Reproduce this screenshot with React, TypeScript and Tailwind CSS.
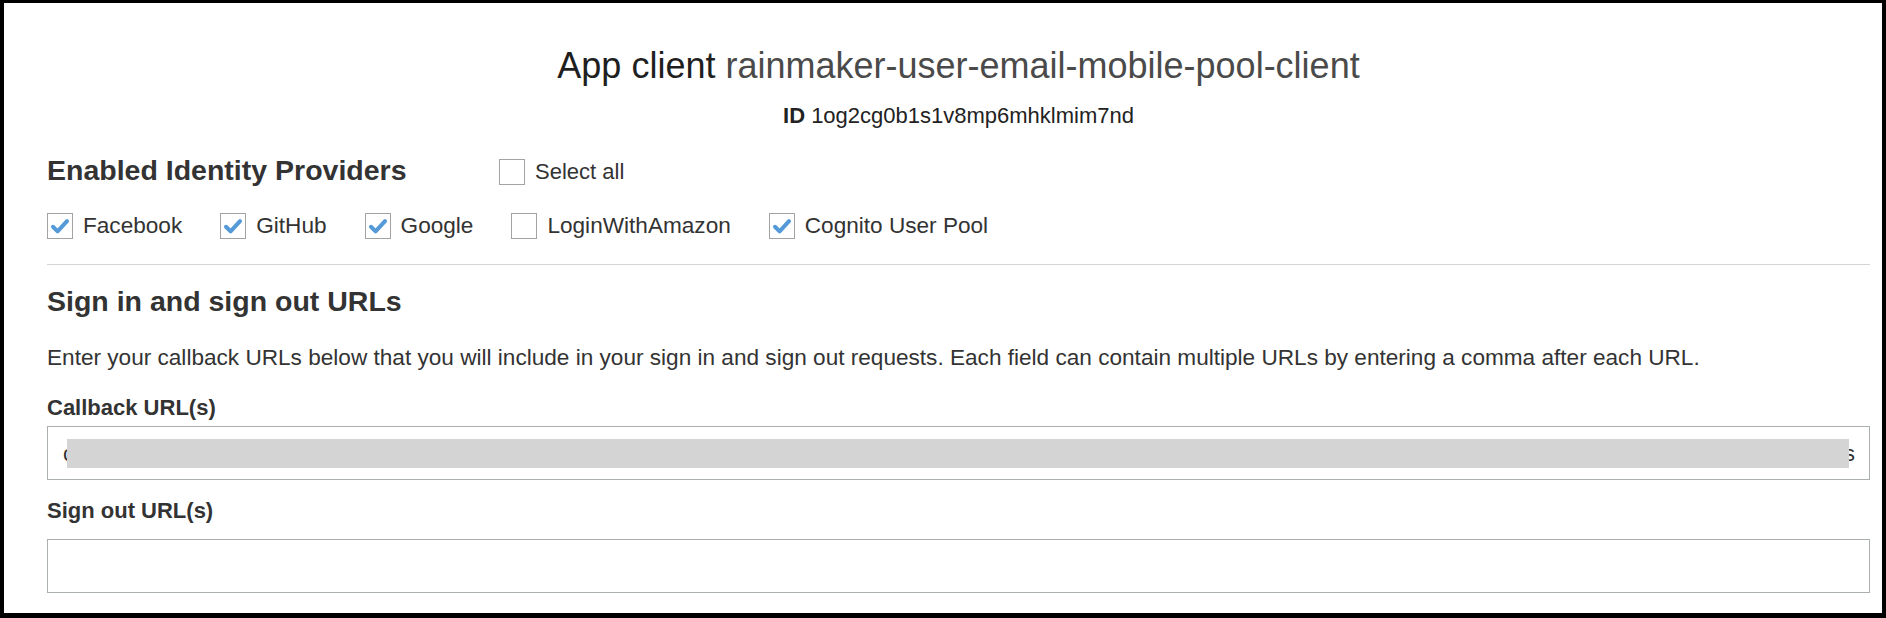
import React from "react";

const Check = () => (
  <svg width="25" height="25" viewBox="0 0 25 25" className="block">
    <path
      d="M5.2 12.8 L10 17.6 L19.8 7"
      fill="none"
      stroke="#559ad8"
      strokeWidth="4.2"
      strokeLinecap="round"
      strokeLinejoin="round"
    />
  </svg>
);

function Box({ checked }: { checked?: boolean }) {
  return (
    <div className="w-[26px] h-[26px] border border-[#a3a3a3] bg-white flex items-center justify-center shrink-0">
      {checked && <Check />}
    </div>
  );
}

function Provider({ label, checked }: { label: string; checked?: boolean }) {
  return (
    <div className="flex items-center gap-[10px] mr-[38px]">
      <Box checked={checked} />
      <span className="text-[22.6px] leading-[26px] text-[#333]">{label}</span>
    </div>
  );
}

export default function App() {
  return (
    <div className="w-[1886px] h-[618px] bg-black pt-[3px] pl-[4px] pr-[4px] pb-[5px] font-['Liberation_Sans',Arial,sans-serif]">
      <div className="bg-white h-full pl-[43px] pr-[12px] pt-[41px] text-[#333]">
        <h1 className="text-center text-[36px] leading-[43px] font-normal">
          <span className="text-[#1f1f1f]">App client</span>{" "}
          <span className="text-[#4a4a4a]">rainmaker-user-email-mobile-pool-client</span>
        </h1>
        <div className="text-center text-[22px] leading-[24px] mt-[17px] text-[#222]">
          <span className="font-bold">ID</span> 1og2cg0b1s1v8mp6mhklmim7nd
        </div>

        <div className="flex items-center mt-[26px] h-[32px]">
          <h2 className="w-[452px] text-[28.5px] leading-[32px] font-bold text-[#333]">
            Enabled Identity Providers
          </h2>
          <div className="flex items-center gap-[10px] mt-[3px]">
            <Box />
            <span className="text-[22px] leading-[26px]">Select all</span>
          </div>
        </div>

        <div className="flex items-center mt-[27px]">
          <Provider label="Facebook" checked />
          <Provider label="GitHub" checked />
          <Provider label="Google" checked />
          <Provider label="LoginWithAmazon" />
          <Provider label="Cognito User Pool" checked />
        </div>

        <div className="h-px bg-[#d5d5d5] mt-[25px]" />

        <h2 className="text-[28.5px] leading-[32px] font-bold mt-[20px]">Sign in and sign out URLs</h2>

        <p className="text-[22.6px] leading-[24px] mt-[29px]">
          Enter your callback URLs below that you will include in your sign in and sign out requests. Each
          field can contain multiple URLs by entering a comma after each URL.
        </p>

        <div className="text-[22px] leading-[24px] font-bold mt-[26px]">Callback URL(s)</div>
        <div className="relative mt-[6px] h-[54px] border border-[#aab0b2] flex items-center justify-between pl-[15px] pr-[14px] overflow-hidden">
          <span className="text-[22px] text-[#333]">c</span>
          <span className="text-[22px] text-[#333]">s</span>
          <div className="absolute left-[19px] right-[20px] top-[12px] h-[29px] bg-[#d4d4d4]" />
        </div>

        <div className="text-[22px] leading-[24px] font-bold mt-[19px]">Sign out URL(s)</div>
        <div className="mt-[16px] h-[54px] border border-[#aab0b2]" />
      </div>
    </div>
  );
}
